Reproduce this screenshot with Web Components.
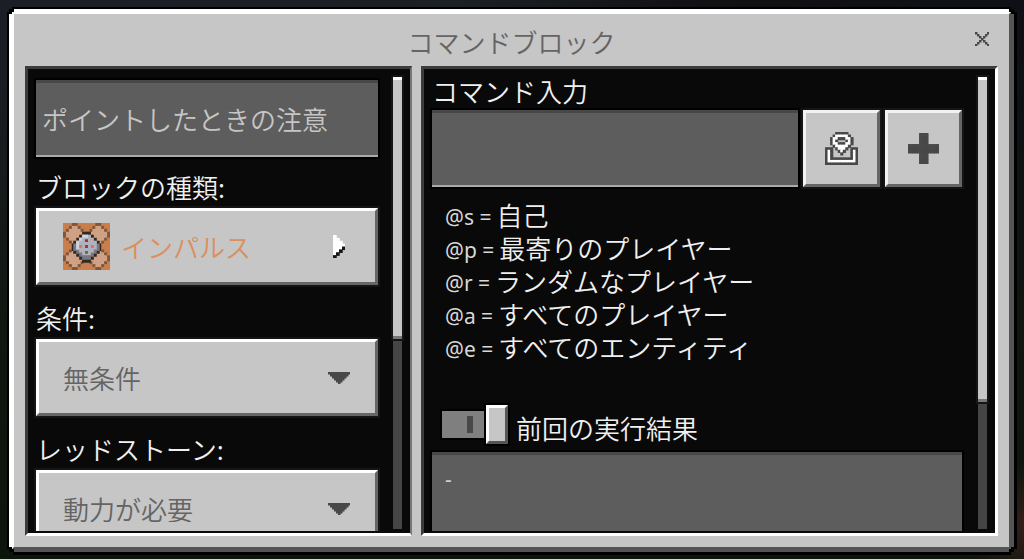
<!DOCTYPE html>
<html lang="ja">
<head>
<meta charset="utf-8">
<meta name="viewport" content="width=device-width, initial-scale=1">
<title>コマンドブロック</title>
<style>
  html, body { height: 100%; }
  body {
    margin: 0; box-sizing: border-box; padding: 7px 7px 4px; overflow: hidden;
    font: 350 26px/26px "Noto Sans CJK JP", sans-serif; color: #f0f0f0;
    background:
      radial-gradient(circle at 100% 94%, #33201a, transparent 64px),
      linear-gradient(180deg, transparent 6%, #101710 60%, #0c140b),
      linear-gradient(90deg, #1c1e27, #1b2024 45%, #111013 70%, #0e1016);
  }
</style>
</head>
<body>
<command-screen></command-screen>
<script>
const define = (name, html, setup) => customElements.define(name, class extends HTMLElement {
  constructor() {
    super();
    const t = document.createElement('template');
    t.innerHTML = html;
    this.attachShadow({ mode: 'open' }).append(t.content.cloneNode(true));
  }
  connectedCallback() { if (setup) setup(this, this.shadowRoot); }
});

/* Pixel art: one character per cell, colours looked up in a palette. */
const palette = { D: '#484848', W: '#ffffff', K: '#161616', O: '#c87f4d', B: '#80563b', T: '#d0a184' };
const art = {
  close: ['D.....D', '.D...D.', '..D.D..', '...D...', '..D.D..', '.D...D.', 'D.....D'],
  cursor: ['W...', 'WW..', 'WWW.', 'WWWW', 'WWWK', 'WWK.', 'WK..', 'K...'],
  locate: [
    '....DDDDD....', '...DWWWWWD...', '..DWWDDDWWD..', '..DWD...DWD..', '..DWWDDDWWD..',
    '...DWWWWWD...', 'DDD.DWWWD.DDD', 'DWD..DWD..DWD', 'DWD...D...DWD', 'DWD.......DWD',
    'DWDDDDDDDDDWD', 'DWWWWWWWWWWWD', 'DDDDDDDDDDDDD'],
  plus: ['.....DDDD.....', '.....DDDD.....', '.....DDDD.....', '.....DDDD.....', '.....DDDD.....',
    'DDDDDDDDDDDDDD', 'DDDDDDDDDDDDDD', 'DDDDDDDDDDDDDD', 'DDDDDDDDDDDDDD',
    '.....DDDD.....', '.....DDDD.....', '.....DDDD.....', '.....DDDD.....', '.....DDDD.....'],
  down: ['DDDDDDDDDDD', '.DDDDDDDDD.', '..DDDDDDD..', '...DDDDD...', '....DDD....', '.....D.....'],
  block: [
    'OOOBBOOOOOOBBOOO', 'OOBTTBOOOOBTTBOO', 'OBTTTTBOOBTTTTBO', 'BTTTTTTBBTTTTTTB',
    'BTTTTTTBBTTTTTTB', 'OBTTTTBOOBTTTTBO', 'OOBTTBOOOOBTTBOO', 'OOOBBOOOOOOBBOOO',
    'OOOBBOOOOOOBBOOO', 'OOBTTBOOOOBTTBOO', 'OBTTTTBOOBTTTTBO', 'BTTTTTTBBTTTTTTB',
    'BTTTTTTBBTTTTTTB', 'OBTTTTBOOBTTTTBO', 'OOBTTBOOOOBTTBOO', 'OOOBBOOOOOOBBOOO']
};
const dial = `<path fill="#332820" d="M6.5 3h3v1h1v1h1v1h1v1h.5v2.5h-.5v1h-1v1h-1v1h-1v1h-3v-1h-1v-1h-1v-1h-1v-1h-.5V7h.5V6h1V5h1V4h1z"/>
<path fill="#777884" d="M6.5 4h3v1h1v1h1v1h1v2.5h-1v1h-1v1h-1v1h-3v-1h-1v-1h-1v-1h-1V7h1V6h1V5h1z"/>
<path fill="#b1b1bd" d="M6.5 4h3v1h1v1h1v3h-1v1h-1v1h-3v-1h-1v-1h-1V6h1V5h1z"/>
<path fill="#d2d2d9" d="M6.5 4h2v1h-2v1h-1v3h-1V6h1V5h1z"/>
<path fill="#b32828" d="M7.5 5.5h1v1h-1z"/><path fill="#c48455" d="M5.5 7.5h1v1h-1z"/>
<path fill="#774746" d="M7.5 7.5h1v1h-1z"/><path fill="#f26763" d="M9.5 7.5h1v1h-1z"/>
<path fill="#467c34" d="M7.5 9.5h1v1h-1z"/>`;

define('pixel-icon', `<style>
  :host { display: block; line-height: 0; }
  svg { display: block; width: 100%; height: 100%; }
</style><svg aria-hidden="true" preserveAspectRatio="none"></svg>`, (el, root) => {
  const name = el.getAttribute('name'), rows = art[name], svg = root.querySelector('svg');
  svg.setAttribute('viewBox', `0 0 ${rows[0].length} ${rows.length}`);
  /* Cells overlap a little so that no seam shows between neighbours. */
  svg.innerHTML = rows.map((row, y) => [...row].map((c, x) =>
    c === '.' ? '' : `<rect x="${x}" y="${y}" width="1.25" height="1.25" fill="${palette[c]}"/>`).join('')).join('')
    + (name === 'block' ? dial : '');
});

define('scroll-rail', `<style>
  :host { display: block; flex: none; width: 9px; background: #454545; }
  div { box-sizing: border-box; height: var(--thumb); background: #c6c6c6;
    border-top: 3px solid #fff; border-bottom: 3px solid #777; box-shadow: 0 0 0 2px #151515; }
</style><div></div>`);

define('inset-panel', `<style>
  :host { display: flex; box-sizing: border-box; min-width: 0; min-height: 0; overflow: hidden;
    background: #090909; border: 3px solid #3c3c3c; border-right-color: var(--edge, #fff);
    border-right-width: var(--edge-width, 3px); border-bottom-color: #fff; padding: 0 8px 2px; gap: var(--rail-gap); }
  .body { flex: 1; min-width: 0; overflow: hidden; margin-left: -4px; padding-left: 4px; padding-right: 4px; margin-right: -4px; }
  scroll-rail { margin-top: 8px; margin-bottom: 2px; }
</style><div class="body"><slot></slot></div><scroll-rail></scroll-rail>`);

define('text-field', `<style>
  :host { display: block; min-width: 0; }
  input, textarea { display: block; box-sizing: border-box; width: 100%; height: 77px; margin: 0; padding: 0 6px 2px;
    border: 0 solid #484848; border-top-width: 3px; border-bottom: 2px solid #aaa; border-radius: 0; outline: 0;
    box-shadow: 0 0 0 2px #000; background: #5d5d5d; color: #d0d0d0; font: inherit; resize: none; }
  textarea { height: 110px; padding: 12px 13px; font: 21px/24px "Noto Sans", sans-serif; overflow: hidden; }
  ::placeholder { color: #c6c6c6; opacity: 1; }
</style>`, (el, root) => {
  const box = document.createElement(el.hasAttribute('multiline') ? 'textarea' : 'input');
  box.placeholder = el.getAttribute('placeholder') || '';
  box.value = el.getAttribute('value') || '';
  box.readOnly = el.hasAttribute('readonly');
  box.setAttribute('aria-label', el.getAttribute('label'));
  root.append(box);
});

define('choice-field', `<style>
  :host { display: block; margin-top: 20px; }
  label { display: block; margin-bottom: 8px; }
  .box { display: grid; align-items: center; height: 77px; }
  .box > * { grid-area: 1 / 1; }
  select { appearance: none; width: 100%; height: 77px; box-sizing: border-box; margin: 0; padding: 0 60px 0 24px;
    border: 3px solid; border-color: #fff #666 #666 #fff; border-radius: 0; outline: 0;
    box-shadow: 0 0 0 2px #151515; background: #c6c6c6; color: #646464; font: inherit; }
  .arrow { justify-self: end; width: 22px; height: 12px; margin-right: 28px; pointer-events: none; }
  .lead { display: none; width: 47px; height: 47px; margin-left: 27px; pointer-events: none; }
  :host([active]) select { padding-left: 82px; color: #d98f5e; }
  :host([active]) .lead { display: block; }
  :host([active]) .arrow { width: 12px; height: 23px; margin-right: 33px; }
</style><label for="choice"></label>
<div class="box"><select id="choice"><option></option></select>
<pixel-icon class="lead" name="block"></pixel-icon><pixel-icon class="arrow" name="down"></pixel-icon></div>`, (el, root) => {
  root.querySelector('label').textContent = el.getAttribute('label');
  root.querySelector('option').textContent = el.getAttribute('value');
  if (el.hasAttribute('active')) {
    const icon = document.createElement('pixel-icon');
    icon.className = 'arrow'; icon.setAttribute('name', 'cursor');
    root.querySelector('.arrow').replaceWith(icon);
  }
});

define('icon-button', `<style>
  :host { display: block; flex: none; }
  button { display: grid; place-items: center; width: 77px; height: 77px; padding: 0; border: 3px solid;
    border-color: #f2f2f2 #666 #666 #f2f2f2; border-radius: 0; background: #c6c6c6; box-shadow: 0 0 0 2px #151515; }
  pixel-icon { width: var(--size); height: var(--size); }
</style><button type="button"></button>`, (el, root) => {
  const b = root.querySelector('button');
  b.setAttribute('aria-label', el.getAttribute('label'));
  b.innerHTML = `<pixel-icon name="${el.getAttribute('icon')}"></pixel-icon>`;
});

define('toggle-switch', `<style>
  :host { display: block; }
  label { display: flex; align-items: center; gap: 8px; }
  input { appearance: none; display: flex; align-items: center; justify-content: flex-end; flex: none;
    width: 66px; height: 39px; margin: 0; }
  input::before { content: ""; flex: 1; height: 27px; box-shadow: 0 0 0 2px #000; margin-right: 2px;
    background: linear-gradient(#484848, #484848) right 11px center / 6px 17px no-repeat, #7f7f7f; }
  input::after { content: ""; box-sizing: border-box; width: 22px; height: 39px; background: #c6c6c6;
    border: 3px solid; border-color: #fff #555 #555 #fff; box-shadow: 0 0 0 2px #000; }
  span { padding-top: 6px; }
</style><label><input type="checkbox" role="switch" checked><span><slot></slot></span></label>`);

define('selector-hint', `<style>
  :host { display: flex; align-items: center; gap: 5px; height: 33px; }
  b { font: 400 21px/26px "Noto Sans", sans-serif; color: #d8d8d8; padding-top: 4px; }
</style><b></b><span><slot></slot></span>`, (el, root) => {
  root.querySelector('b').textContent = el.getAttribute('key') + ' =';
});

define('window-frame', `<style>
  :host { display: block; height: 100%; box-sizing: border-box; padding: 2px 3px 3px 2px; background: #000;
    clip-path: polygon(0 5px, 2px 5px, 2px 2px, 5px 2px, 5px 0, calc(100% - 6px) 0, calc(100% - 6px) 2px, calc(100% - 3px) 2px, calc(100% - 3px) 5px, 100% 5px, 100% calc(100% - 6px), calc(100% - 3px) calc(100% - 6px), calc(100% - 3px) calc(100% - 3px), calc(100% - 6px) calc(100% - 3px), calc(100% - 6px) 100%, 6px 100%, 6px calc(100% - 3px), 2px calc(100% - 3px), 2px calc(100% - 6px), 0 calc(100% - 6px)); }
  .face { height: 100%; box-sizing: border-box; display: flex; flex-direction: column; background: #c6c6c6;
    border: 5px solid; border-color: #fff #555 #555 #fff; padding: 0 11px 11px;
    clip-path: polygon(0 5px, 3px 5px, 3px 3px, 5px 3px, 5px 0, calc(100% - 5px) 0, calc(100% - 5px) 3px, calc(100% - 3px) 3px, calc(100% - 3px) 5px, 100% 5px, 100% calc(100% - 5px), calc(100% - 3px) calc(100% - 5px), calc(100% - 3px) calc(100% - 3px), calc(100% - 5px) calc(100% - 3px), calc(100% - 5px) 100%, 5px 100%, 5px calc(100% - 3px), 3px calc(100% - 3px), 3px calc(100% - 5px), 0 calc(100% - 5px)); }
  header { display: grid; grid-template-columns: 1fr auto 1fr; align-items: center; height: 52px; flex: none; }
  h1 { grid-column: 2; margin: 0; padding-top: 4px; font: inherit; color: #646464; }
  button { justify-self: end; width: 26px; height: 26px; margin-right: 3px; padding: 5px 6px 7px; border: 0; background: none; }
  main { flex: 1; min-height: 0; display: grid; grid-template-columns: 387fr 577fr; grid-template-rows: 100%; gap: 9px; }
</style><div class="face"><header><h1></h1><button type="button" aria-label="閉じる"><pixel-icon name="close"></pixel-icon></button></header>
<main><slot></slot></main></div>`, (el, root) => {
  root.querySelector('h1').textContent = el.getAttribute('heading');
});

define('command-screen', `<style>
  :host { display: block; height: 100%; }
  .left { --edge: #777; --edge-width: 2px; --rail-gap: 15px; --thumb: 58%; }
  .right { --rail-gap: 16px; --thumb: 72%; }
  .left text-field { margin-top: 11px; }
  .left text-field + choice-field { margin-top: 17px; }
  h2 { margin: 0; padding: 9px 0 6px; font: inherit; }
  .command { display: flex; gap: 5px; }
  .command text-field { flex: 1; }
  .hints { padding: 11px 13px 0; }
  toggle-switch { margin: 42px 10px 8px; }
</style>
<window-frame heading="コマンドブロック">
  <inset-panel class="left">
    <text-field label="ポイントしたときの注意" placeholder="ポイントしたときの注意"></text-field>
    <choice-field active label="ブロックの種類:" value="インパルス"></choice-field>
    <choice-field label="条件:" value="無条件"></choice-field>
    <choice-field label="レッドストーン:" value="動力が必要"></choice-field>
  </inset-panel>
  <inset-panel class="right">
    <h2>コマンド入力</h2>
    <div class="command">
      <text-field label="コマンド入力"></text-field>
      <icon-button icon="locate" label="セレクター" style="--size:33px"></icon-button>
      <icon-button icon="plus" label="追加" style="--size:31px"></icon-button>
    </div>
    <div class="hints">
      <selector-hint key="@s">自己</selector-hint>
      <selector-hint key="@p">最寄りのプレイヤー</selector-hint>
      <selector-hint key="@r">ランダムなプレイヤー</selector-hint>
      <selector-hint key="@a">すべてのプレイヤー</selector-hint>
      <selector-hint key="@e">すべてのエンティティ</selector-hint>
    </div>
    <toggle-switch>前回の実行結果</toggle-switch>
    <text-field multiline readonly label="前回の実行結果" value="-"></text-field>
  </inset-panel>
</window-frame>`);
</script>
</body>
</html>
